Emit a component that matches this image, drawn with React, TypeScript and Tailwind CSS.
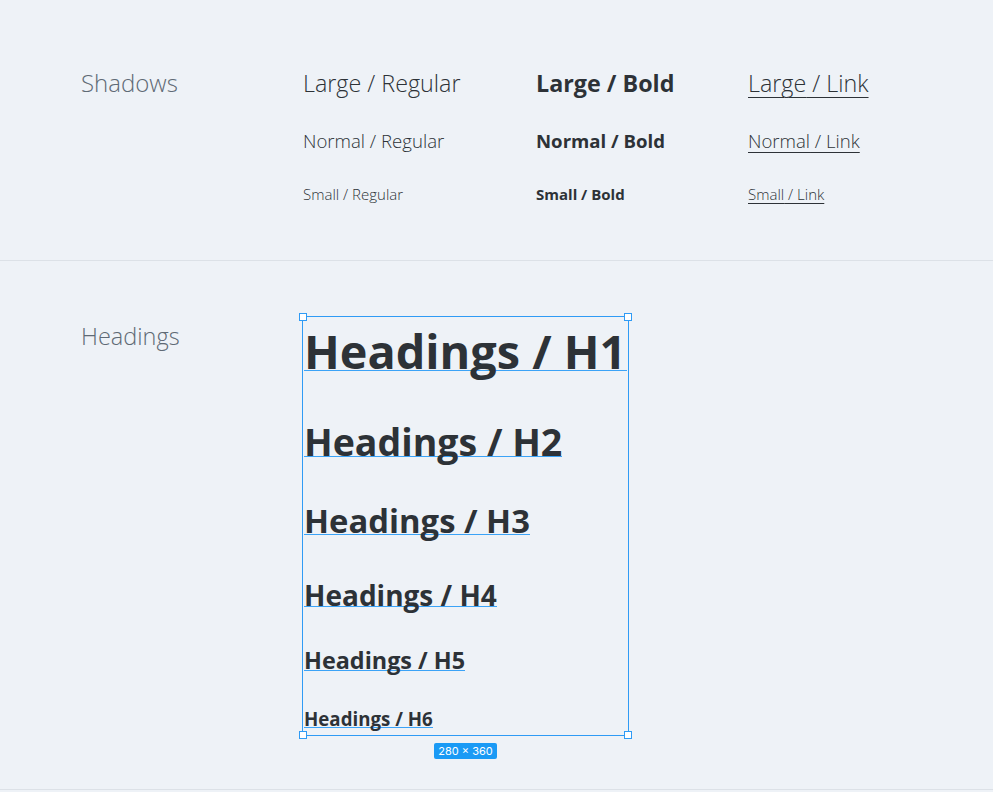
const font = "font-['Open_Sans',sans-serif]";

const rows = [
  { size: "text-[23.3px] leading-[32px]", mt: "mt-0", link: "underline-offset-[5px]" },
  { size: "text-[18.6px] leading-[26px]", mt: "mt-[29px]", link: "underline-offset-[4px]" },
  { size: "text-[15px] leading-[20px]", mt: "mt-[30px]", link: "underline-offset-[3px]" },
];
const names = ["Large", "Normal", "Small"];

const headings = [
  { label: "H1", cls: "text-[46.8px] h-[43px] mt-[11px] self-stretch" },
  { label: "H2", cls: "text-[37.5px] h-[34px] mt-[52px] w-fit" },
  { label: "H3", cls: "text-[32.8px] h-[30px] mt-[48px] w-fit" },
  { label: "H4", cls: "text-[28px] h-[26px] mt-[46px] w-fit" },
  { label: "H5", cls: "text-[23.4px] h-[22px] mt-[42px] w-fit" },
  { label: "H6", cls: "text-[18.7px] h-[18px] mt-[39px] w-fit" },
];

function Handle({ pos }: { pos: string }) {
  return <span className={`absolute w-[8px] h-[8px] bg-white border border-[#2f9bf5] ${pos}`} />;
}

export default function App() {
  return (
    <div className={`${font} bg-[#eef2f7] w-[993px] h-[792px] overflow-hidden text-[#2d3237]`}>
      {/* Text styles */}
      <section className="h-[261px] flex pl-[81px] pt-[67px] border-b border-[#dce1e7]">
        <div className="w-[222px] text-[24px] leading-[32px] font-light text-[#5f6a75]">Shadows</div>
        <div className="w-[233px] flex flex-col font-light">
          {rows.map((r, i) => (
            <div key={i} className={`${r.size} ${r.mt}`}>{names[i]} / Regular</div>
          ))}
        </div>
        <div className="w-[212px] flex flex-col font-bold">
          {rows.map((r, i) => (
            <div key={i} className={`${r.size} ${r.mt}`}>{names[i]} / Bold</div>
          ))}
        </div>
        <div className="flex flex-col font-light">
          {rows.map((r, i) => (
            <div key={i} className={`${r.size} ${r.mt}`}>
              <span className={`underline decoration-1 ${r.link}`}>{names[i]} / Link</span>
            </div>
          ))}
        </div>
      </section>

      {/* Headings */}
      <section className="h-[529px] flex pl-[81px] pt-[55px] border-b border-[#dce1e7]">
        <div className="w-[221px] text-[23.5px] leading-[32px] font-light text-[#5f6a75] mt-[4px]">
          Headings
        </div>
        <div className="flex flex-col">
          <div className="relative w-[327px] h-[420px] border border-[#2f9bf5] flex flex-col px-[1px] font-bold">
            {headings.map((h) => (
              <div key={h.label} className={`${h.cls} leading-none whitespace-nowrap border-b border-[#3ba3f7]`}>
                Headings / {h.label}
              </div>
            ))}
            <Handle pos="-left-[4px] -top-[4px]" />
            <Handle pos="-right-[4px] -top-[4px]" />
            <Handle pos="-left-[4px] -bottom-[4px]" />
            <Handle pos="-right-[4px] -bottom-[4px]" />
          </div>
          <div className="flex justify-center mt-[7px]">
            <span className="bg-[#1a9af5] text-white text-[11px] leading-[16px] px-[4px] rounded-[2px] font-['Inter',sans-serif]">
              280 × 360
            </span>
          </div>
        </div>
      </section>
    </div>
  );
}
